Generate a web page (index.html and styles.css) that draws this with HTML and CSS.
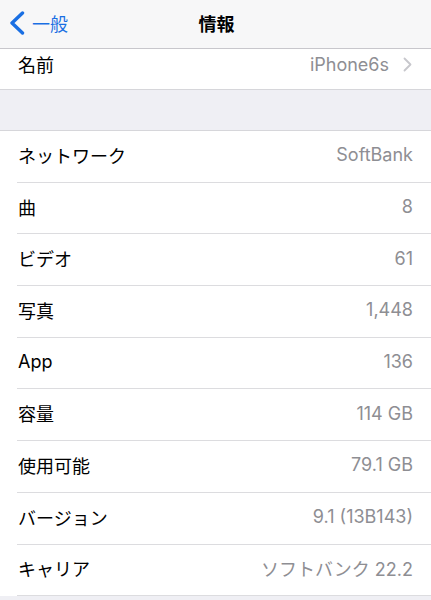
FILE: index.html
```html
<!DOCTYPE html>
<html lang="ja">
<head>
    <meta charset="UTF-8">
    <meta name="viewport" content="width=device-width, initial-scale=1.0">
    <title>情報</title>
    <link rel="stylesheet" href="styles.css">
</head>
<body>
    <!-- Navigation bar -->
    <div class="nav-bar">
        <div class="nav-back">
            <svg class="back-icon" width="16" height="24" viewBox="0 0 16 24">
                <path d="M13.5 2 L3 12 L13.5 22" fill="none" stroke="#1a6fe3" stroke-width="3.4" stroke-linecap="round" stroke-linejoin="round"/>
            </svg>
            <span>一般</span>
        </div>
        <div class="nav-title">情報</div>
    </div>

    <div class="group name-group">
        <div class="row name-row">
            <span class="label">名前</span>
            <span class="value">iPhone6s</span>
            <svg class="chevron" width="9" height="15" viewBox="0 0 9 15">
                <path d="M1.5 1.5 L7.5 7.5 L1.5 13.5" fill="none" stroke="#c7c7cc" stroke-width="1.8" stroke-linecap="round" stroke-linejoin="round"/>
            </svg>
        </div>
    </div>

    <div class="spacer"></div>

    <div class="group">
        <div class="row"><span class="label">ネットワーク</span><span class="value">SoftBank</span></div>
        <div class="row"><span class="label">曲</span><span class="value">8</span></div>
        <div class="row"><span class="label">ビデオ</span><span class="value">61</span></div>
        <div class="row"><span class="label">写真</span><span class="value">1,448</span></div>
        <div class="row"><span class="label">App</span><span class="value">136</span></div>
        <div class="row"><span class="label">容量</span><span class="value">114 GB</span></div>
        <div class="row"><span class="label">使用可能</span><span class="value">79.1 GB</span></div>
        <div class="row"><span class="label">バージョン</span><span class="value">9.1 (13B143)</span></div>
        <div class="row"><span class="label">キャリア</span><span class="value">ソフトバンク 22.2</span></div>
    </div>
</body>
</html>
```

FILE: styles.css
```css
body {
    margin: 0;
    background: #efeff4;
    font-family: Inter, "Noto Sans CJK JP", sans-serif;
    font-size: 18px;
    color: #000;
}
.nav-bar {
    position: relative;
    height: 48px;
    background: #f7f7f8;
    border-bottom: 1px solid #c8c7cc;
    display: flex;
    align-items: center;
    justify-content: center;
}
.nav-back {
    position: absolute;
    left: 9px;
    top: 10px;
    display: flex;
    align-items: center;
    gap: 7px;
    color: #1a6fe3;
    font-size: 18px;
}
.nav-title {
    font-weight: bold;
    font-size: 18px;
    margin-left: 2px;
    padding-bottom: 2px;
}
.group {
    background: #fff;
}
.name-group {
    border-bottom: 1px solid #d6d6da;
}
.spacer {
    height: 40px;
    border-bottom: 1px solid #d6d6da;
}
.row {
    height: 51.7px;
    box-sizing: border-box;
    margin-left: 17px;
    padding-right: 18px;
    padding-bottom: 3px;
    display: flex;
    align-items: center;
    border-bottom: 1px solid #dcdcdf;
}
.name-row {
    height: 40px;
    border-bottom: none;
    padding-right: 19px;
    padding-bottom: 10px;
}
.label {
    flex: 1;
    padding-left: 1px;
}
.value {
    color: #8e8e93;
}
.chevron {
    margin-left: 14px;
}
```
